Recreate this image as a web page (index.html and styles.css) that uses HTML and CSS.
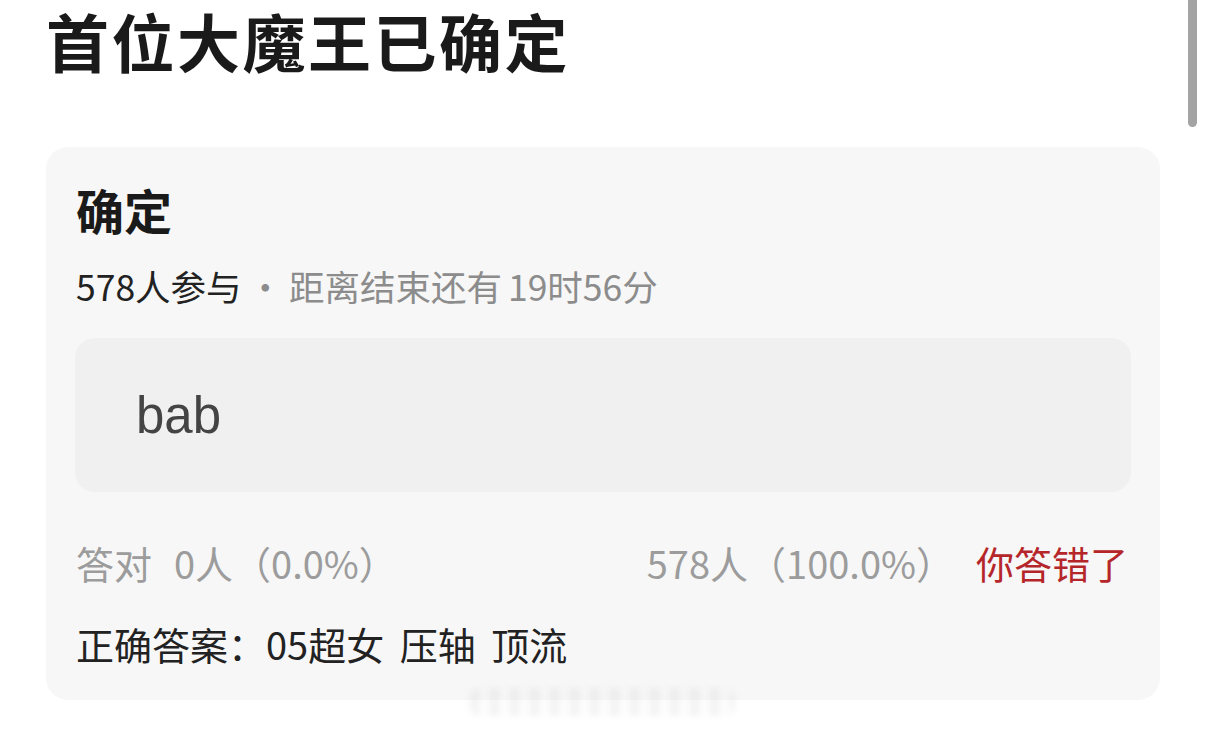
FILE: index.html
```html
<!DOCTYPE html>
<html lang="zh-CN">
<head>
<meta charset="utf-8">
<title>首位大魔王已确定</title>
<link rel="stylesheet" href="styles.css">
</head>
<body>
<div class="page">
  <h1 class="title">首位大魔王已确定</h1>
  <section class="card">
    <h2 class="card-title">确定</h2>
    <p class="meta"><span class="meta-count">578人参与</span><span class="meta-rest"> · 距离结束还有 19时56分</span></p>
    <div class="option"><span class="option-text">bab</span></div>
    <div class="stats">
      <span class="stat-left">答对<span class="gap">0人（0.0%）</span></span>
      <span class="stat-right"><span>578人（100.0%）</span><span class="wrong">你答错了</span></span>
    </div>
    <p class="answer">正确答案：05超女 压轴 顶流</p>
  </section>
  <div class="watermark"></div>
  <div class="scrollbar"></div>
</div>
</body>
</html>
```
FILE: styles.css
```css
html, body {
  margin: 0;
  padding: 0;
  background: #ffffff;
}
body {
  font-family: "Noto Sans CJK SC", "Noto Sans", sans-serif;
  color: #1c1c1c;
}
.page {
  position: relative;
  width: 1206px;
  height: 729px;
  overflow: hidden;
}
.title {
  margin: 0 0 68px 46px;
  padding-top: 1px;
  font-size: 63px;
  line-height: 78px;
  font-weight: 700;
  color: #1a1a1a;
  letter-spacing: 2.5px;
}
.card {
  margin-left: 46px;
  width: 1114px;
  box-sizing: border-box;
  padding: 32px 29px 32px 29px;
  background: #f7f7f7;
  border-radius: 22px;
}
.card-title {
  margin: 0 0 25px 1px;
  font-size: 48px;
  line-height: 60px;
  font-weight: 700;
  color: #1a1a1a;
}
.meta {
  margin: 0 0 30px 1px;
  font-size: 35.5px;
  line-height: 44px;
}
.meta-count {
  color: #222;
}
.meta-rest {
  color: #8c8c8c;
  word-spacing: -2px;
}
.option {
  height: 154px;
  box-sizing: border-box;
  padding-left: 61px;
  display: flex;
  align-items: center;
  background: #f0f0f0;
  border-radius: 20px;
}
.option-text {
  font-family: "Liberation Sans", Arial, sans-serif;
  font-size: 51px;
  color: #444;
}
.stats {
  margin: 47px 3px 33px 1px;
  display: flex;
  justify-content: space-between;
  font-size: 38px;
  line-height: 48px;
  color: #9c9c9c;
}
.gap {
  margin-left: 22px;
}
.stat-right {
  display: flex;
  gap: 22px;
}
.wrong {
  color: #b5262a;
}
.answer {
  margin: 0 0 0 1px;
  font-size: 38px;
  line-height: 48px;
  color: #222;
  word-spacing: 7px;
}
.watermark {
  position: absolute;
  left: 470px;
  top: 688px;
  width: 265px;
  height: 28px;
  border-radius: 10px;
  background: repeating-linear-gradient(90deg, rgba(205,205,205,0.25) 0 9px, rgba(240,240,240,0.15) 9px 20px);
  filter: blur(3px);
}
.scrollbar {
  position: absolute;
  left: 1188px;
  top: -6px;
  width: 9px;
  height: 133px;
  border-radius: 5px;
  background: #a3a3a3;
}
```
